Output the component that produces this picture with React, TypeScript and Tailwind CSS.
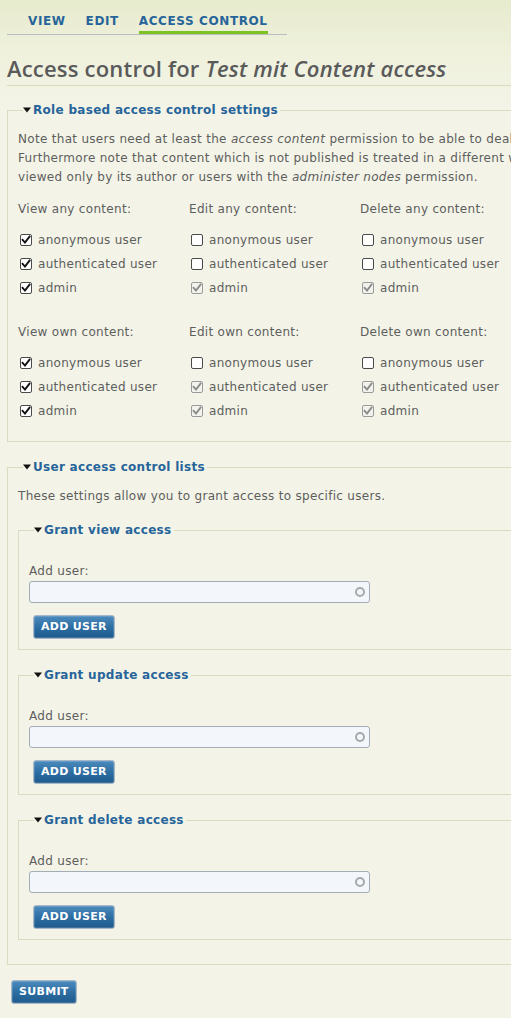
import React from "react";

const font = { fontFamily: '"DejaVu Sans", Verdana, sans-serif' };

function Box({ checked, disabled }: { checked: boolean; disabled?: boolean }) {
  const stroke = disabled ? "#9a9a9a" : "#4a4a4a";
  const check = disabled ? "#8a8a8a" : "#111";
  return (
    <svg width="12" height="12" viewBox="0 0 12 12" className="shrink-0">
      <rect x="0.5" y="0.5" width="11" height="11" rx="1.5" fill={disabled ? "#f3f3ee" : "#ffffff"} stroke={stroke} />
      {checked && (
        <path d="M2.6 5.8 L5 8.6 L9.5 2.7" fill="none" stroke={check} strokeWidth="1.9" strokeLinecap="square" />
      )}
    </svg>
  );
}

function Row({ label, checked, disabled }: { label: string; checked: boolean; disabled?: boolean }) {
  return (
    <div className="flex h-[24px] items-center gap-[6px] pl-[2px]">
      <Box checked={checked} disabled={disabled} />
      <span>{label}</span>
    </div>
  );
}

type Col = { title: string; rows: [boolean, boolean?][] };

function Group({ cols }: { cols: Col[] }) {
  const names = ["anonymous user", "authenticated user", "admin"];
  return (
    <div className="grid grid-cols-[171px_171px_171px]">
      {cols.map((c) => (
        <div key={c.title}>
          <div className="h-[19px] leading-[19px]">{c.title}</div>
          <div className="mt-[9px]">
            {c.rows.map((r, i) => (
              <Row key={i} label={names[i]} checked={r[0]} disabled={r[1]} />
            ))}
          </div>
        </div>
      ))}
    </div>
  );
}

function Legend({ children }: { children: React.ReactNode }) {
  return (
    <legend className="ml-[5px] flex h-[16px] items-center pr-[2px] text-[12px] font-bold leading-[16px] tracking-[0.3px] text-[#27649a]">
      <svg width="8" height="6" viewBox="0 0 8 6" className="mr-[2px]">
        <path d="M0 0.5 H8 L4 5.5 Z" fill="#111" />
      </svg>
      {children}
    </legend>
  );
}

function Btn({ children, className }: { children: React.ReactNode; className?: string }) {
  return (
    <button
      className={
        "h-[24px] rounded-[3px] border border-[#a7b7c7] bg-[linear-gradient(180deg,#4c8bbd_0%,#2d6ea3_50%,#1f5a8c_100%)] px-[7px] text-[11px] font-bold leading-[22px] tracking-[0.3px] text-white shadow-[inset_0_0_0_1px_rgba(255,255,255,0.15)] " +
        (className ?? "")
      }
      style={font}
    >
      {children}
    </button>
  );
}

function Grant({ title, last }: { title: string; last?: boolean }) {
  return (
    <fieldset className={"w-[620px] border border-[#d9dcbf] px-[10px] pb-[10px] pt-[24px] " + (last ? "" : "mb-[17px]")}>
      <Legend>{title}</Legend>
      <div className="h-[19px] leading-[19px]">Add user:</div>
      <div className="relative h-[22px] w-[341px] rounded-[3px] border border-[#a3adb6] bg-[#f3f7fb]">
        <span className="absolute right-[4px] top-[5px] h-[10px] w-[10px] rounded-full border-[2px] border-[#a8a8a8]" />
      </div>
      <Btn className="ml-[4px] mt-[12px]">ADD USER</Btn>
    </fieldset>
  );
}

export default function App() {
  return (
    <div
      className="relative h-[1018px] w-[511px] overflow-hidden bg-[linear-gradient(180deg,#e7ebcd_0px,#eff1dc_50px,#f3f4e7_110px,#f3f4e7_100%)] text-[12px] tracking-[0.3px] text-[#5e5e5e]"
      style={font}
    >
      <div className="ml-[7px] flex w-[280px] border-b border-[#b9bdc2] pl-[11px] pt-[12px] tracking-normal">
        <div className="px-[10px] text-[12px] font-bold leading-[19px] tracking-[0.6px] text-[#27649a]">VIEW</div>
        <div className="px-[10px] text-[12px] font-bold leading-[19px] tracking-[0.6px] text-[#27649a]">EDIT</div>
        <div className="px-[10px] text-[12px] font-bold tracking-[0.6px] text-[#27649a]">
          <div className="border-b-[3px] border-[#7dc322] leading-[19px]">ACCESS CONTROL</div>
        </div>
      </div>

      <h1
        className="ml-[7px] mt-[19px] w-[700px] border-b border-[#d9dcbf] pb-[3px] text-[22px] font-semibold leading-[28px] tracking-[0.2px] text-[#5a5a5a]"
        style={{ fontFamily: '"Open Sans", sans-serif' }}
      >
        Access control for <em>Test mit Content access</em>
      </h1>

      <div className="ml-[7px] w-[700px]">
        <fieldset className="mt-[16px] border border-[#d9dcbf] px-[10px] pb-[18px] pt-[12px]">
          <Legend>Role based access control settings</Legend>
          <p className="whitespace-nowrap leading-[19px]">
            Note that users need at least the <em>access content</em> permission to be able to deal with access control at all.
            <br />
            Furthermore note that content which is not published is treated in a different way by drupal: It can be
            <br />
            viewed only by its author or users with the <em>administer nodes</em> permission.
          </p>
          <div className="mt-[13px]">
            <Group
              cols={[
                { title: "View any content:", rows: [[true], [true], [true]] },
                { title: "Edit any content:", rows: [[false], [false], [true, true]] },
                { title: "Delete any content:", rows: [[false], [false], [true, true]] },
              ]}
            />
          </div>
          <div className="mt-[23px]">
            <Group
              cols={[
                { title: "View own content:", rows: [[true], [true], [true]] },
                { title: "Edit own content:", rows: [[false], [true, true], [true, true]] },
                { title: "Delete own content:", rows: [[false], [true, true], [true, true]] },
              ]}
            />
          </div>
        </fieldset>

        <fieldset className="mt-[17px] border border-[#d9dcbf] px-[10px] pb-[24px] pt-[12px]">
          <Legend>User access control lists</Legend>
          <p className="whitespace-nowrap leading-[19px]">These settings allow you to grant access to specific users.</p>
          <div className="mt-[16px]">
            <Grant title="Grant view access" />
            <Grant title="Grant update access" />
            <Grant title="Grant delete access" last />
          </div>
        </fieldset>

        <Btn className="ml-[4px] mt-[15px]">SUBMIT</Btn>
      </div>
    </div>
  );
}
